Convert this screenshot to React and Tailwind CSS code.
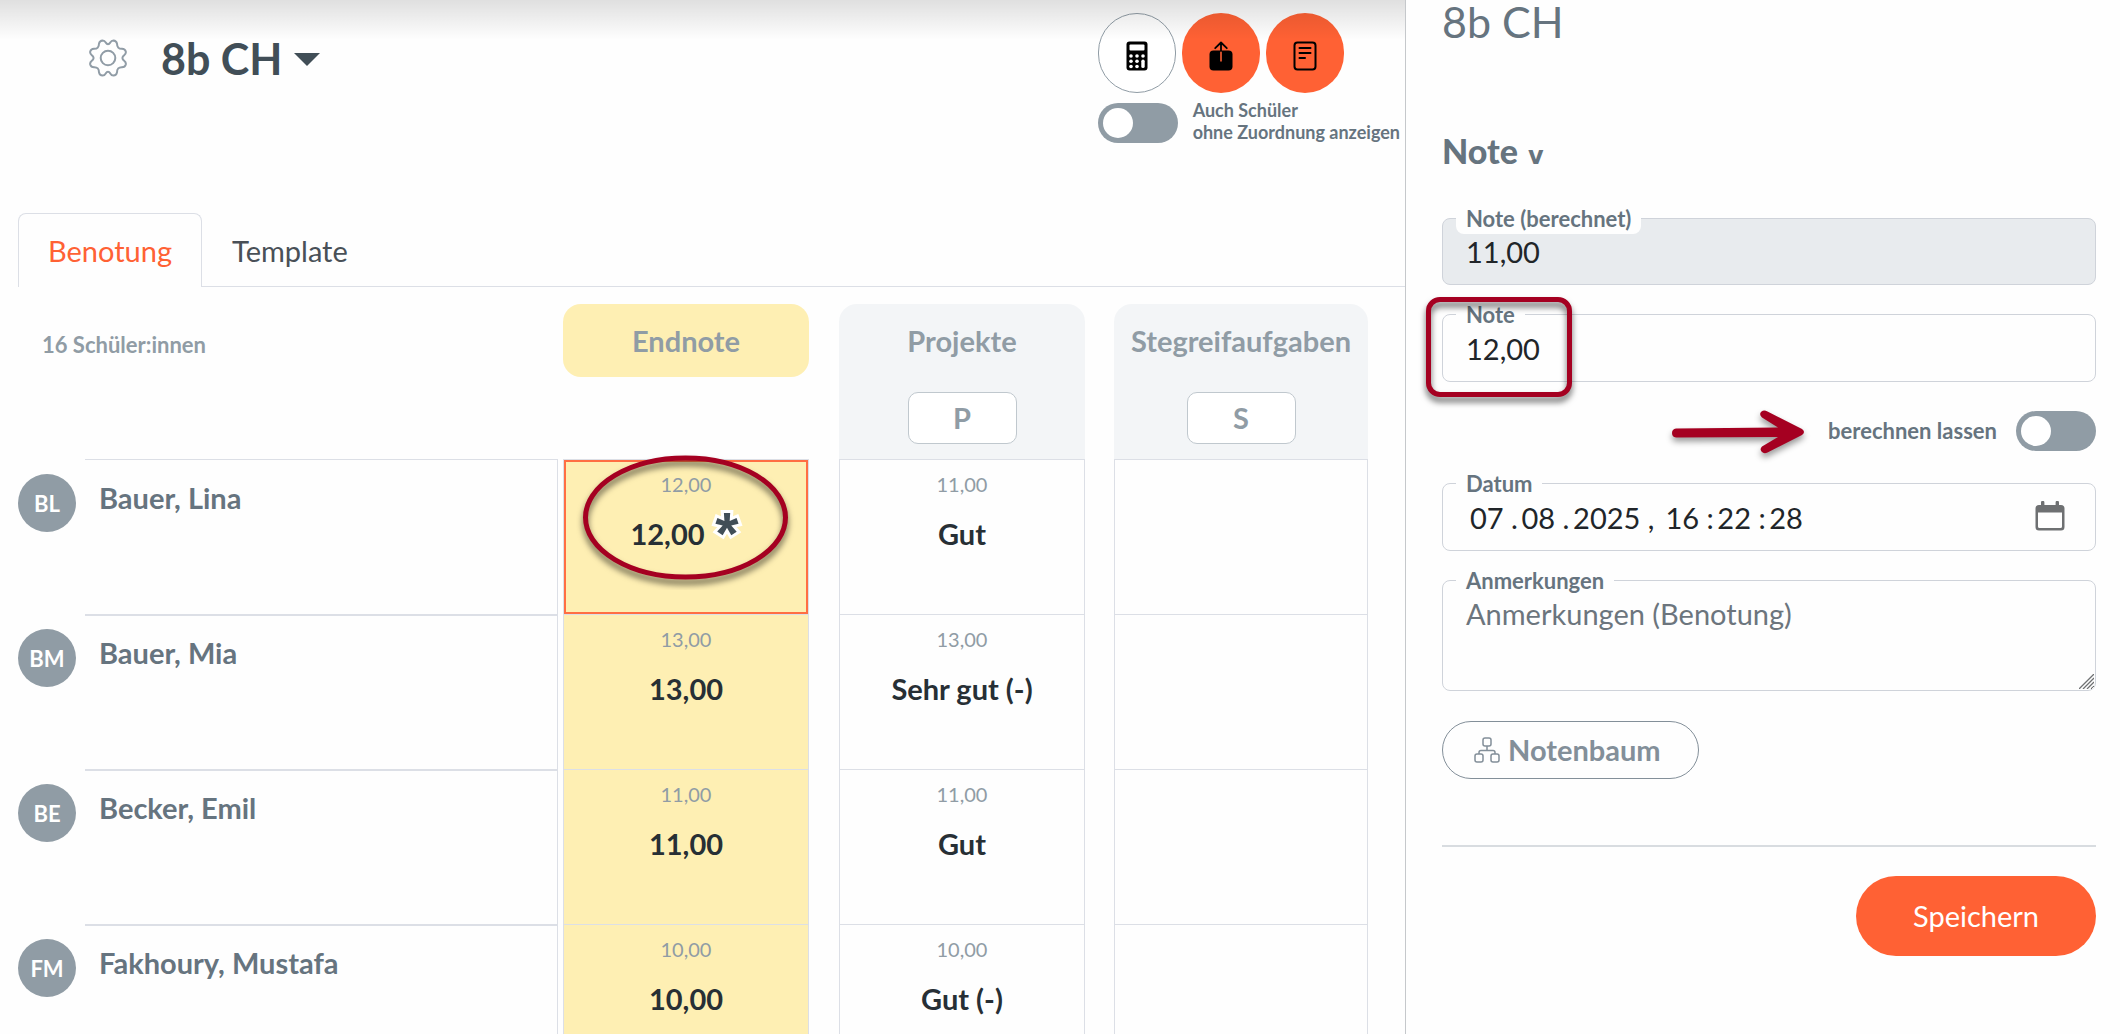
const students = [
  { initials: 'BL', name: 'Bauer, Lina', points: '12,00', final: '12,00', edited: true, project: ['11,00', 'Gut'] },
  { initials: 'BM', name: 'Bauer, Mia', points: '13,00', final: '13,00', project: ['13,00', 'Sehr gut (-)'] },
  { initials: 'BE', name: 'Becker, Emil', points: '11,00', final: '11,00', project: ['11,00', 'Gut'] },
  { initials: 'FM', name: 'Fakhoury, Mustafa', points: '10,00', final: '10,00', project: ['10,00', 'Gut (-)'] },
];

function GearIcon() {
  return (
    <svg className="w-[38px] h-[38px] text-[#909ca6]" viewBox="0 0 38 38" fill="none" stroke="currentColor" strokeWidth="2" strokeLinejoin="round">
      <path d="M10 4.6Q10.6 1.6 13.6 1.4Q15.6 1.4 16.6 3.4Q19 7 21.4 3.4Q22.4 1.4 24.4 1.4Q27.4 1.6 28 4.6Q28 10 33 9.8Q36 9.8 36.8 12.6Q37.2 14.6 35.4 16Q31.4 19 35.4 22Q37.2 23.4 36.8 25.4Q36 28.2 33 28.2Q28 28 28 33.4Q27.4 36.4 24.4 36.6Q22.4 36.6 21.4 34.6Q19 31 16.6 34.6Q15.6 36.6 13.6 36.6Q10.6 36.4 10 33.4Q10 28 5 28.2Q2 28.2 1.2 25.4Q.8 23.4 2.6 22Q6.6 19 2.6 16Q.8 14.6 1.2 12.6Q2 9.8 5 9.8Q10 10 10 4.6Z" />
      <circle cx="19" cy="19" r="7.3" />
    </svg>
  );
}

function CalculatorIcon() {
  return (
    <svg className="w-[22px] h-[30px]" viewBox="0 0 22 30">
      <rect x=".5" y=".5" width="21" height="29" rx="3" fill="black" />
      <g fill="white">
        <rect x="3.5" y="3.5" width="15" height="6" rx="1" />
        <circle cx="5" cy="15" r="1.8" />
        <circle cx="11" cy="15" r="1.8" />
        <circle cx="17" cy="15" r="1.8" />
        <circle cx="5" cy="20.3" r="1.8" />
        <circle cx="11" cy="20.3" r="1.8" />
        <circle cx="5" cy="25.5" r="1.8" />
        <circle cx="11" cy="25.5" r="1.8" />
        <rect x="15.3" y="18.5" width="3.4" height="8.6" rx="1.7" />
      </g>
    </svg>
  );
}

function ShareIcon() {
  return (
    <svg className="w-[24px] h-[30px]" viewBox="0 0 24 30" fill="none">
      <rect x=".5" y="9.5" width="23" height="20" rx="4" fill="black" />
      <path d="M12 9.5v11" stroke="#ff6134" strokeWidth="1.6" />
      <path d="M12 10V1.5M6.2 7.2L12 1.5l5.8 5.7" stroke="black" strokeWidth="1.8" strokeLinecap="round" strokeLinejoin="round" />
    </svg>
  );
}

function PageIcon() {
  return (
    <svg className="w-[24px] h-[30px]" viewBox="0 0 24 30" fill="none" stroke="black" strokeWidth="2" strokeLinecap="round">
      <rect x="1.5" y="1.5" width="21" height="27" rx="3" />
      <path d="M6.5 7h11M6.5 12h11M6.5 17h5.5" />
    </svg>
  );
}

function TreeIcon() {
  return (
    <svg className="w-[26px] h-[26px]" viewBox="0 0 26 26" fill="none" stroke="currentColor" strokeWidth="1.5">
      <rect x="9" y="1" width="8" height="8" rx="2" />
      <rect x="1" y="17" width="8" height="8" rx="2" />
      <rect x="17" y="17" width="8" height="8" rx="2" />
      <path d="M13 9v4.5M5 17v-1.5q0-2 2-2h12q2 0 2 2V17" />
    </svg>
  );
}

function CalendarIcon() {
  return (
    <svg className="w-[30px] h-[30px]" viewBox="0 0 30 30" fill="#6e7072">
      <path fillRule="evenodd" d="M6 1.5a1.7 1.7 0 0 1 3.4 0V4h11.2V1.5a1.7 1.7 0 0 1 3.4 0V4h2a3.5 3.5 0 0 1 3.5 3.5v18.5a3.5 3.5 0 0 1-3.5 3.5h-22a3.5 3.5 0 0 1-3.5-3.5v-18.5a3.5 3.5 0 0 1 3.5-3.5H6zM3 11.5v14a1.5 1.5 0 0 0 1.5 1.5h21a1.5 1.5 0 0 0 1.5-1.5v-14z" />
    </svg>
  );
}

function Switch({ id }) {
  return (
    <input
      id={id}
      type="checkbox"
      role="switch"
      className="appearance-none shrink-0 w-20 h-10 p-[5px] rounded-full bg-[#909ca5] cursor-pointer
                 before:block before:size-[30px] before:rounded-full before:bg-white
                 checked:bg-[#ff6134] checked:before:translate-x-10"
    />
  );
}

function Field({ id, label, children }) {
  return (
    <div className="relative">
      <label
        htmlFor={id}
        className="absolute left-[14px] -top-[14px] px-[10px] rounded-lg bg-[#fefefe] text-[22px] leading-[30px] font-bold text-[#66747f]"
      >
        {label}
      </label>
      {children}
    </div>
  );
}

const inputStyles = 'block w-full rounded-lg border border-[#cfd3da] px-[23px] text-[29px] text-[#212529]';

function GradeCell({ points, grade, edited, yellow }) {
  return (
    <td className={`relative h-[155px] p-0 align-top text-center border-x border-t border-[#dcdfe6] ${yellow ? 'bg-[#feefb3]' : ''}`}>
      {edited && <div className="absolute inset-0 border-2 border-[#ff6e43]" />}
      {points && (
        <div className="relative pt-[10px]">
          <div className="text-xl leading-7 text-[#909ca5]">{points}</div>
          <div className="mt-[18px] flex justify-center gap-2 text-[29px] leading-9 font-bold text-[#272f35]">
            {grade}
            {edited && (
              <span className="w-[29px] h-9 font-['Liberation_Sans',sans-serif] text-[60px] leading-9 text-[#414e57] [-webkit-text-stroke:6px_white] [paint-order:stroke]">*</span>
            )}
          </div>
        </div>
      )}
      {edited && (
        <svg className="absolute left-3 -top-3 w-[220px] h-[142px] pointer-events-none" viewBox="0 0 220 142" fill="none">
          <ellipse cx="109.5" cy="69.5" rx="100" ry="59.5" stroke="#a50021" strokeWidth="5" className="drop-shadow-[0_5px_3px_rgba(0,0,0,0.6)]" />
        </svg>
      )}
    </td>
  );
}

function ColumnHeader({ title, short }) {
  return (
    <th className="p-0 align-top">
      <div className="h-[155px] pt-4 rounded-t-[18px] bg-[#f3f5f7] flex flex-col items-center justify-between pb-[15px]">
        <span>{title}</span>
        <button className="w-[109px] h-[52px] rounded-[10px] border border-[#c0c8ce] bg-white font-bold">{short}</button>
      </div>
    </th>
  );
}

function GradeTable() {
  return (
    <table className="w-full table-fixed border-separate border-spacing-0">
      <colgroup>
        <col className="w-[85px]" />
        <col />
        <col className="w-[5px]" />
        <col className="w-[246px]" />
        <col className="w-[30px]" />
        <col className="w-[246px]" />
        <col className="w-[29px]" />
        <col className="w-[254px]" />
        <col className="w-[37px]" />
      </colgroup>
      <thead className="text-[29px] leading-[42px] text-[#909ca5]">
        <tr>
          <th colSpan={2} className="p-0 pl-[42px] pt-5 align-top text-left text-[22px]">16 Schüler:innen</th>
          <th />
          <th className="p-0 align-top">
            <div className="h-[73px] pt-4 rounded-[18px] bg-[#feefb3]">Endnote</div>
          </th>
          <th />
          <ColumnHeader title="Projekte" short="P" />
          <th />
          <ColumnHeader title="Stegreifaufgaben" short="S" />
          <th />
        </tr>
      </thead>
      <tbody>
        {students.map((s, i) => (
          <tr key={s.initials}>
            <td className="p-0 pl-[18px] pt-[15px] align-top">
              <div className="size-[58px] rounded-full bg-[#909ca5] flex items-center justify-center text-[22px] font-bold text-white">
                {s.initials}
              </div>
            </td>
            <td className={`p-0 pl-[14px] align-top border-r border-[#dcdfe6] text-[29px] leading-9 font-bold text-[#66747f] ${i === 0 ? 'border-t pt-5' : 'border-t-2 pt-[19px]'}`}>
              {s.name}
            </td>
            <td />
            <GradeCell points={s.points} grade={s.final} edited={s.edited} yellow />
            <td />
            <GradeCell points={s.project[0]} grade={s.project[1]} />
            <td />
            <GradeCell />
            <td />
          </tr>
        ))}
      </tbody>
    </table>
  );
}

function Header() {
  return (
    <header className="flex justify-between pl-[89px] pt-[13px]">
      <div className="flex items-start pt-[18px]">
        <button aria-label="Einstellungen" className="mt-2"><GearIcon /></button>
        <button className="ml-[34px] flex items-center gap-3 text-[43px] leading-[56px] font-bold text-[#414e57]">
          8b CH
          <svg className="w-[26px] h-[13px]" viewBox="0 0 26 13" fill="currentColor"><path d="M0 0h26L13 13z" /></svg>
        </button>
      </div>
      <div>
        <div className="flex gap-[6px]">
          <button aria-label="Rechner" className="w-[78px] h-20 rounded-full border border-[#909ca5] bg-white flex items-center justify-center pt-1.5"><CalculatorIcon /></button>
          <button aria-label="Exportieren" className="w-[78px] h-20 rounded-full bg-[#ff6134] flex items-center justify-center pt-1.5"><ShareIcon /></button>
          <button aria-label="Bericht" className="w-[78px] h-20 rounded-full bg-[#ff6134] flex items-center justify-center pt-1.5"><PageIcon /></button>
        </div>
        <div className="mt-[10px] flex items-start gap-[15px]">
          <Switch id="show-all" />
          <label htmlFor="show-all" className="-mt-1 pr-[5px] text-lg leading-[22px] font-bold text-[#66747f] whitespace-nowrap">
            Auch Schüler<br />ohne Zuordnung anzeigen
          </label>
        </div>
      </div>
    </header>
  );
}

function SidePanel() {
  return (
    <aside className="w-[715px] shrink-0 border-l border-[#c5c8cb] pl-9 pr-6">
      <h2 className="text-[43px] leading-[44px] text-[#66747f]">8b CH</h2>
      <h3 className="mt-[85px] text-[34px] leading-[44px] font-black text-[#66747f]">
        Note <span className="ml-0.5 font-['DejaVu_Sans',sans-serif] text-2xl font-bold">v</span>
      </h3>

      <form className="mt-[45px]" onSubmit={(e) => e.preventDefault()}>
        <div className="flex flex-col gap-[29px]">
          <Field id="calculated" label="Note (berechnet)">
            <input id="calculated" readOnly defaultValue="11,00" className={`${inputStyles} h-[67px] bg-[#e8ebee]`} />
          </Field>
          <div className="relative">
            <Field id="grade" label="Note">
              <input id="grade" defaultValue="12,00" className={`${inputStyles} h-[68px]`} />
            </Field>
            <div className="absolute -left-4 -top-[17px] w-[146px] h-[100px] rounded-[14px] border-[5px] border-[#a50021] drop-shadow-[0_5px_3px_rgba(0,0,0,0.6)] pointer-events-none" />
          </div>

          <div className="flex items-center justify-end h-10 mb-[3px]">
            <svg className="mr-[22px] w-[136px] h-[50px] drop-shadow-[0_4px_3px_rgba(0,0,0,0.4)]" viewBox="0 0 136 50" fill="#a50021">
              <path d="M6 22.5L108 21.5 92 11.5Q88.5 8 91.5 5.5Q94 3.5 97.5 5.5L132 23Q136 26 132 29L97.5 46.5Q94 48.5 91.5 45.5Q89.5 43 92 40.5L108 31 6 31.5Q2 31 2 27T6 22.5Z" />
            </svg>
            <label htmlFor="auto" className="mr-[19px] text-[22px] leading-7 font-bold text-[#66747f]">berechnen lassen</label>
            <Switch id="auto" />
          </div>

          <Field id="date" label="Datum">
            <input id="date" defaultValue={'07 .\u200908 .\u20092025 , \u200916 :\u200922 :\u200928'} className={`${inputStyles} h-[68px] pl-[27px]`} />
            <button type="button" aria-label="Kalender" className="absolute right-[31px] top-[18px]"><CalendarIcon /></button>
          </Field>
          <Field id="notes" label="Anmerkungen">
            <textarea id="notes" placeholder="Anmerkungen (Benotung)" className={`${inputStyles} h-[111px] pt-[13px] leading-[40px] placeholder:text-[#6c757d]`} />
            <svg className="absolute right-0.5 bottom-0.5 size-[15px] bg-[#fefefe] rounded-br-md pointer-events-none" viewBox="0 0 15 15" stroke="#6f7173" strokeWidth="1.3">
              <path d="M0 15L15 0M4 15L15 4M8 15l7-7M12 15l3-3" />
            </svg>
          </Field>
        </div>

        <button type="button" className="mt-[30px] h-[58px] pl-[31px] pr-[37px] rounded-full border border-[#838f99] flex items-center gap-2 text-[29px] font-bold text-[#838f99]">
          <TreeIcon />
          Notenbaum
        </button>
        <hr className="mt-[66px] border-t-2 border-[#d8dce0]" />
        <button className="mt-[29px] ml-auto block w-60 h-20 rounded-full bg-[#ff6134] text-[29px] text-white">Speichern</button>
      </form>
    </aside>
  );
}

export default function App() {
  return (
    <div className="flex h-screen overflow-hidden bg-[#fefefe] font-['Lato',sans-serif]">
      <main className="relative flex-1 min-w-0">
        <div className="absolute inset-x-0 top-0 h-10 bg-linear-to-b from-black/12 to-transparent pointer-events-none" />
        <Header />
        <nav className="mt-[70px] ml-[18px] flex border-b border-[#dcdfe6] text-[29px] text-[#495057]">
          <a href="#benotung" className="-mb-px h-[74px] px-[29px] pt-[15px] rounded-t-lg border border-b-0 border-[#dcdfe6] bg-[#fefefe] text-[#ff6134]">Benotung</a>
          <a href="#template" className="px-[30px] pt-4">Template</a>
        </nav>
        <div className="pt-[17px]">
          <GradeTable />
        </div>
      </main>
      <SidePanel />
    </div>
  );
}
